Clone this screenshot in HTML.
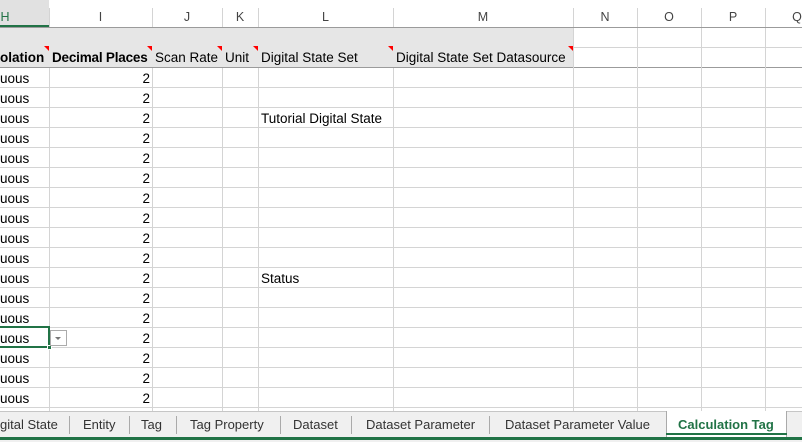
<!DOCTYPE html>
<html><head><meta charset="utf-8"><style>
*{margin:0;padding:0;box-sizing:border-box}
body{width:802px;height:442px;overflow:hidden;background:#fff;font-family:"Liberation Sans",sans-serif;position:relative;font-size:13.5px;color:#000}
.a{position:absolute}
.cl{position:absolute;top:0;height:27px;line-height:34px;font-size:12.5px;color:#444;text-align:center}
.v{position:absolute;width:1px;background:#d4d4d4}
.hd{position:absolute;top:50px;font-size:13.5px;white-space:nowrap}
.tri{position:absolute;top:46px;width:0;height:0;border-top:5px solid #f00;border-left:5px solid transparent}
.r{position:absolute;height:20px;line-height:22px;white-space:nowrap}
.tab{position:absolute;top:417px;font-size:13px;color:#333;white-space:nowrap}
.sep{position:absolute;top:416px;width:1px;height:18px;background:#aaa}
</style></head><body>
<div class="a" style="left:0;top:0;width:49px;height:27px;background:#e1e1e1"></div>
<div class="a" style="left:0;top:25px;width:49px;height:2px;background:#217346"></div>
<div class="a" style="left:0;top:27px;width:802px;height:1px;background:#9b9b9b"></div>
<div class="cl" style="left:0;width:10px;color:#217346">H</div>
<div class="cl" style="left:49px;width:103px">I</div>
<div class="cl" style="left:152px;width:70px">J</div>
<div class="cl" style="left:222px;width:36px">K</div>
<div class="cl" style="left:258px;width:135px">L</div>
<div class="cl" style="left:393px;width:180px">M</div>
<div class="cl" style="left:573px;width:64px">N</div>
<div class="cl" style="left:637px;width:64px">O</div>
<div class="cl" style="left:701px;width:64px">P</div>
<div class="cl" style="left:765px;width:64px">Q</div>
<div class="v" style="left:49px;top:8px;height:19px"></div>
<div class="v" style="left:152px;top:8px;height:19px"></div>
<div class="v" style="left:222px;top:8px;height:19px"></div>
<div class="v" style="left:258px;top:8px;height:19px"></div>
<div class="v" style="left:393px;top:8px;height:19px"></div>
<div class="v" style="left:573px;top:8px;height:19px"></div>
<div class="v" style="left:637px;top:8px;height:19px"></div>
<div class="v" style="left:701px;top:8px;height:19px"></div>
<div class="v" style="left:765px;top:8px;height:19px"></div>
<div class="a" style="left:0;top:28px;width:573px;height:39px;background:#e6e6e6"></div>
<div class="a" style="left:573px;top:47px;width:229px;height:1px;background:#d4d4d4"></div>
<div class="a" style="left:0;top:67px;width:802px;height:1px;background:#9b9b9b"></div>
<div class="a" style="left:0;top:68px;width:802px;height:343px;background:repeating-linear-gradient(to bottom,transparent 0,transparent 19px,#d4d4d4 19px,#d4d4d4 20px)"></div>
<div class="v" style="left:49px;top:68px;height:343px"></div>
<div class="v" style="left:152px;top:68px;height:343px"></div>
<div class="v" style="left:222px;top:68px;height:343px"></div>
<div class="v" style="left:258px;top:68px;height:343px"></div>
<div class="v" style="left:393px;top:68px;height:343px"></div>
<div class="v" style="left:573px;top:28px;height:383px"></div>
<div class="v" style="left:637px;top:28px;height:383px"></div>
<div class="v" style="left:701px;top:28px;height:383px"></div>
<div class="v" style="left:765px;top:28px;height:383px"></div>
<div class="hd" style="left:0;font-weight:bold">olation</div>
<div class="tri" style="left:44px"></div>
<div class="hd" style="left:52px;font-weight:bold;letter-spacing:-0.2px">Decimal Places</div>
<div class="tri" style="left:147px"></div>
<div class="hd" style="left:155px">Scan Rate</div>
<div class="tri" style="left:217px"></div>
<div class="hd" style="left:225px">Unit</div>
<div class="tri" style="left:253px"></div>
<div class="hd" style="left:261px">Digital State Set</div>
<div class="tri" style="left:388px"></div>
<div class="hd" style="left:396px">Digital State Set Datasource</div>
<div class="tri" style="left:568px"></div>
<div class="r" style="left:0;top:68px">uous</div><div class="r" style="left:49px;top:68px;width:101px;text-align:right">2</div>
<div class="r" style="left:0;top:88px">uous</div><div class="r" style="left:49px;top:88px;width:101px;text-align:right">2</div>
<div class="r" style="left:0;top:108px">uous</div><div class="r" style="left:49px;top:108px;width:101px;text-align:right">2</div>
<div class="r" style="left:0;top:128px">uous</div><div class="r" style="left:49px;top:128px;width:101px;text-align:right">2</div>
<div class="r" style="left:0;top:148px">uous</div><div class="r" style="left:49px;top:148px;width:101px;text-align:right">2</div>
<div class="r" style="left:0;top:168px">uous</div><div class="r" style="left:49px;top:168px;width:101px;text-align:right">2</div>
<div class="r" style="left:0;top:188px">uous</div><div class="r" style="left:49px;top:188px;width:101px;text-align:right">2</div>
<div class="r" style="left:0;top:208px">uous</div><div class="r" style="left:49px;top:208px;width:101px;text-align:right">2</div>
<div class="r" style="left:0;top:228px">uous</div><div class="r" style="left:49px;top:228px;width:101px;text-align:right">2</div>
<div class="r" style="left:0;top:248px">uous</div><div class="r" style="left:49px;top:248px;width:101px;text-align:right">2</div>
<div class="r" style="left:0;top:268px">uous</div><div class="r" style="left:49px;top:268px;width:101px;text-align:right">2</div>
<div class="r" style="left:0;top:288px">uous</div><div class="r" style="left:49px;top:288px;width:101px;text-align:right">2</div>
<div class="r" style="left:0;top:308px">uous</div><div class="r" style="left:49px;top:308px;width:101px;text-align:right">2</div>
<div class="r" style="left:0;top:328px">uous</div><div class="r" style="left:49px;top:328px;width:101px;text-align:right">2</div>
<div class="r" style="left:0;top:348px">uous</div><div class="r" style="left:49px;top:348px;width:101px;text-align:right">2</div>
<div class="r" style="left:0;top:368px">uous</div><div class="r" style="left:49px;top:368px;width:101px;text-align:right">2</div>
<div class="r" style="left:0;top:388px">uous</div><div class="r" style="left:49px;top:388px;width:101px;text-align:right">2</div>
<div class="r" style="left:261px;top:108px">Tutorial Digital State</div>
<div class="r" style="left:261px;top:268px">Status</div>
<div class="a" style="left:-2px;top:326px;width:52px;height:22px;border:2px solid #217346"></div>
<div class="a" style="left:47px;top:345px;width:5px;height:5px;background:#217346;border:1px solid #fff"></div>
<div class="a" style="left:50px;top:330px;width:17px;height:16px;border:1px solid #ababab;background:#fff"></div>
<div class="a" style="left:55px;top:337px;width:0;height:0;border-left:3.5px solid transparent;border-right:3.5px solid transparent;border-top:3.5px solid #777"></div>
<div class="a" style="left:0;top:411px;width:802px;height:31px;background:#f0f0f0"></div>
<div class="a" style="left:0;top:411px;width:802px;height:1px;background:#c6c6c6"></div>
<div class="tab" style="left:0">gital State</div>
<div class="sep" style="left:69px"></div>
<div class="tab" style="left:83px">Entity</div>
<div class="sep" style="left:129px"></div>
<div class="tab" style="left:141px">Tag</div>
<div class="sep" style="left:176px"></div>
<div class="tab" style="left:190px">Tag Property</div>
<div class="sep" style="left:280px"></div>
<div class="tab" style="left:293px">Dataset</div>
<div class="sep" style="left:351px"></div>
<div class="tab" style="left:366px">Dataset Parameter</div>
<div class="sep" style="left:489px"></div>
<div class="tab" style="left:505px">Dataset Parameter Value</div>
<div class="a" style="left:666px;top:411px;width:121px;height:26px;background:#fff;border:1px solid #aaa;border-top:none;border-bottom:none"></div>
<div class="a" style="left:666px;top:433px;width:121px;height:2px;background:#217346"></div>
<div class="tab" style="left:678px;font-weight:bold;color:#217346">Calculation Tag</div>
<div class="a" style="left:0;top:437px;width:802px;height:3px;background:#217346"></div>
</body></html>
